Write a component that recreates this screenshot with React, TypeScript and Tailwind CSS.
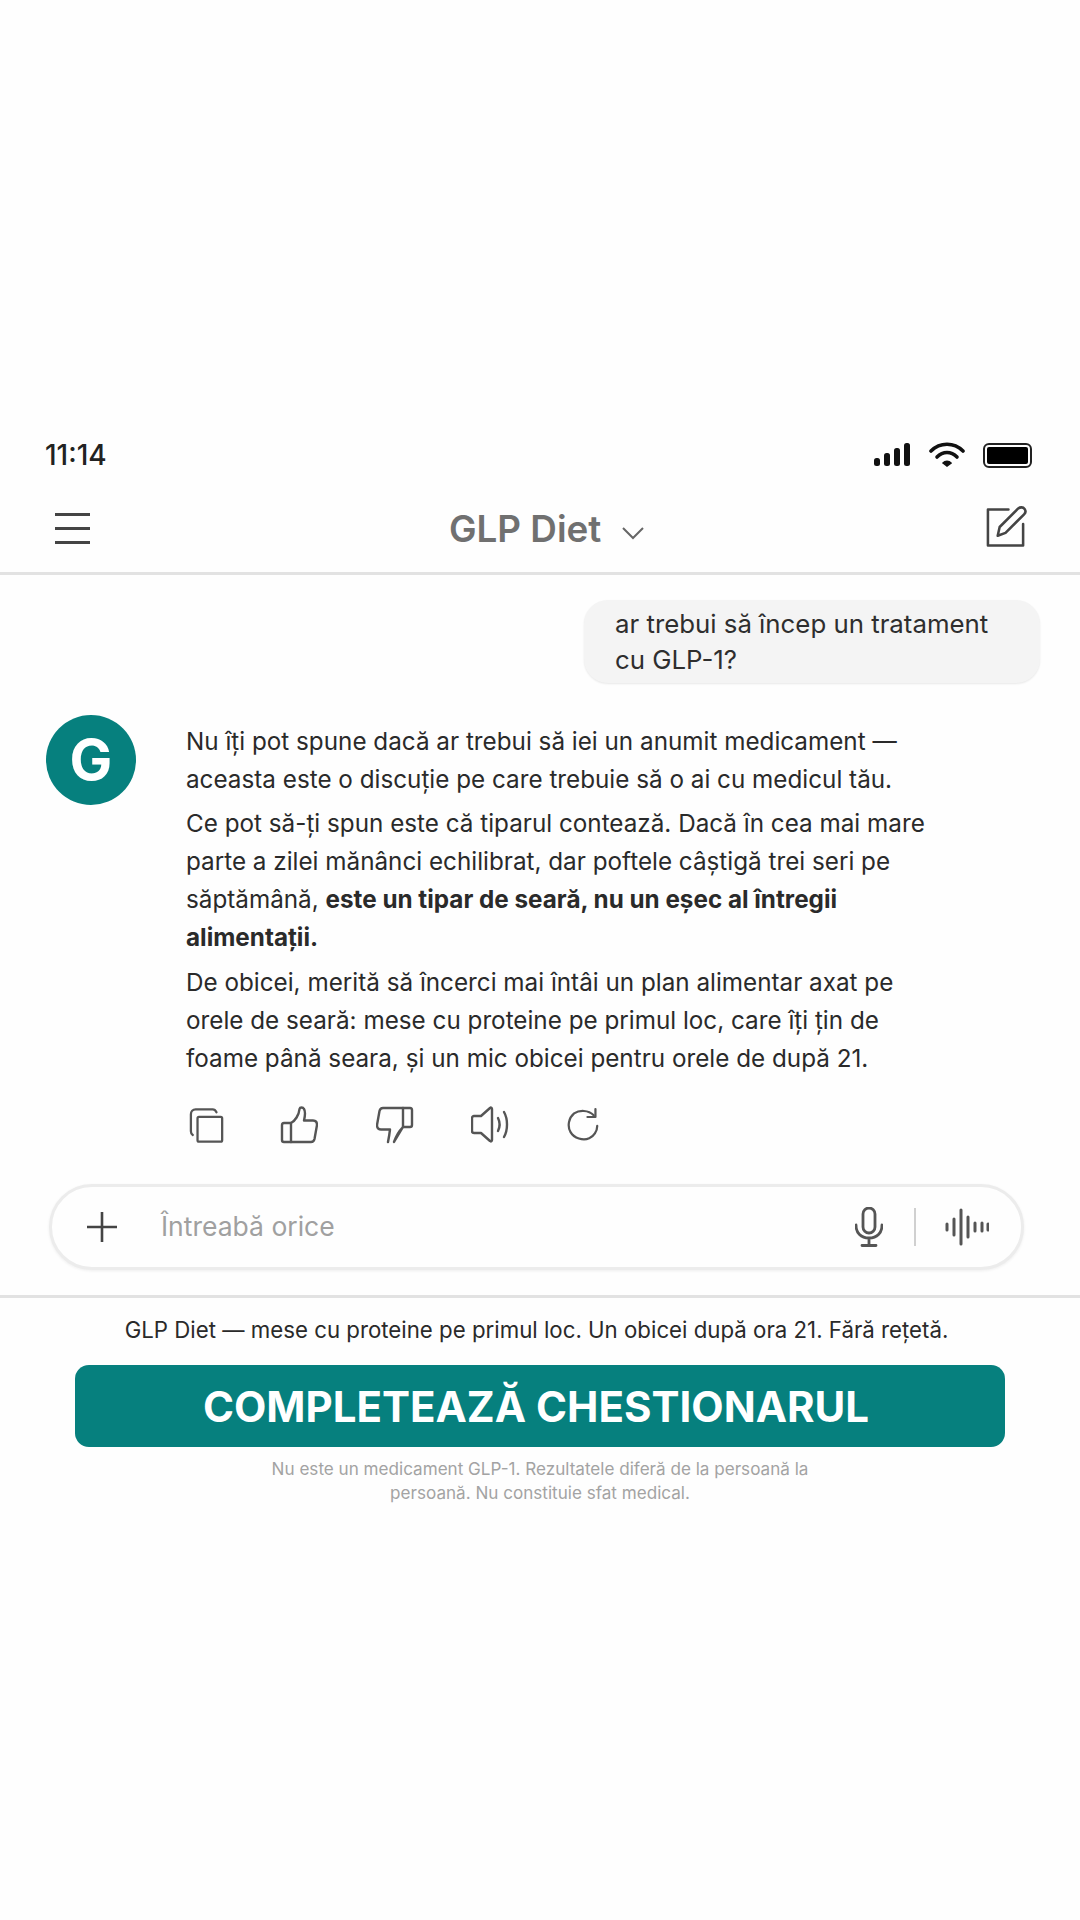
import React from "react";

const Ic = ({ children, w = 40, h = 40, vb = "0 0 40 40", sw = 2, c = "#555" }: any) => (
  <svg width={w} height={h} viewBox={vb} fill="none" stroke={c} strokeWidth={sw} strokeLinecap="round" strokeLinejoin="round">{children}</svg>
);

export default function App() {
  return (
    <div className="w-[1080px] h-[1920px] bg-[#fefefe] font-['Inter',sans-serif] text-[#2a2a2a] overflow-hidden">
      <div className="h-[431px]" />
      <div className="h-[50px] pl-[45px] pr-[48px] flex items-center justify-between">
        <span className="text-[28px] font-medium text-[#222] mb-[2px]">11:14</span>
        <div className="flex items-center gap-[18px] mb-[2px]">
          <svg width="37" height="26" viewBox="0 0 37 26" fill="#111">
            <rect x="0" y="16" width="6" height="8" rx="2.5" /><rect x="10" y="11" width="6" height="13" rx="2.5" /><rect x="20" y="6" width="6" height="18" rx="2.5" /><rect x="30" y="1" width="6" height="23" rx="2.5" />
          </svg>
          <svg width="36" height="26" viewBox="0 0 36 26" fill="none" stroke="#111" strokeWidth="3.6" strokeLinecap="round">
            <path d="M2 9C11 0 25 0 34 9" /><path d="M8 15C14 9 22 9 28 15" /><path d="M14 21L18 24L22 21C20 18.500 16 18.500 14 21Z" fill="#111" strokeWidth="1.500" />
          </svg>
          <div className="w-[49px] h-[25px] rounded-[6px] border-[2px] border-[#222] p-[2px]"><div className="w-full h-full bg-black rounded-[2px]" /></div>
        </div>
      </div>
      <div className="h-[94px] relative flex items-center justify-between pl-[55px] pr-[52px] border-b-[3px] border-[#e2e2e2]">
        <div className="flex flex-col gap-[11px] w-[35px] mt-[4px]">
          <div className="h-[3px] bg-[#444]" /><div className="h-[3px] bg-[#444]" /><div className="h-[3px] bg-[#444]" />
        </div>
        <div className="absolute left-[449px] top-[26px] flex items-center gap-[20px]">
          <span className="text-[36.800px] font-semibold text-[#707070] leading-[44px]">GLP Diet</span>
          <svg width="24" height="14" viewBox="0 0 24 14" fill="none" stroke="#666" strokeWidth="2" className="mt-[8px]"><path d="M2 2L12 12L22 2" /></svg>
        </div>
        <Ic w={43} h={44} vb="0 0 44 44" sw={2.600} c="#444">
          <path d="M24 4H3V41H39V19" />
          <path d="M13 31L15 22L34 3C36 1.500 39 1.500 40.500 3.500C42 5.500 41.500 7.500 40 9L21 28Z" />
        </Ic>
      </div>
      <div className="flex justify-end pt-[25px] pr-[40px]">
        <div className="w-[456px] h-[83px] rounded-[24px] bg-[#f4f4f4] pl-[31px] pt-[6px] text-[25.800px] leading-[36px] text-[#2e2e2e] shadow-[0_1px_2px_#e8e8e8]">
          ar trebui să încep un tratament<br />cu GLP-1?
        </div>
      </div>
      <div className="flex pl-[46px] pt-[32px]">
        <div className="w-[90px] h-[90px] rounded-full bg-[#06807e] flex items-center justify-center text-white text-[57px] font-bold shrink-0">G</div>
        <div className="ml-[50px] w-[800px] text-[24.250px] leading-[38px] text-[#2a2a2a] pt-[8px]">
          <p>Nu îți pot spune dacă ar trebui să iei un anumit medicament —<br />aceasta este o discuție pe care trebuie să o ai cu medicul tău.</p>
          <p className="mt-[6px]">Ce pot să-ți spun este că tiparul contează. Dacă în cea mai mare<br />parte a zilei mănânci echilibrat, dar poftele câștigă trei seri pe<br />săptămână, <b className="font-bold">este un tipar de seară, nu un eșec al întregii<br />alimentații.</b></p>
          <p className="mt-[7px]">De obicei, merită să încerci mai întâi un plan alimentar axat pe<br />orele de seară: mese cu proteine pe primul loc, care îți țin de<br />foame până seara, și un mic obicei pentru orele de după 21.</p>
        </div>
      </div>
      <div className="flex items-center pl-[189px] pt-[16px] h-[62px] box-content">
        <div className="flex items-center">
          <Ic w={36} h={37} vb="0 0 38 38" sw={2.400}>
            <rect x="9" y="10" width="26" height="26" rx="1.500" />
            <path d="M4 29C2.500 28 2 27 2 25V7C2 4 4 2 7 2H25C27 2 28 3 29 5" />
          </Ic>
          <div className="ml-[55px]"><Ic w={38} h={38} vb="0 0 38 38" sw={2.400}>
            <path d="M11 17V36H31C33 36 34 35 34.500 33L37 19C37 16 36 14.500 33 14.500H24C25 10 26 6 24 3C23 1 20 1 19.500 3C19 9 15 15 11 17Z" />
            <path d="M11 17H4C2.500 17 2 18 2 19V34C2 35 2.500 36 4 36H11" />
          </Ic></div>
          <div className="ml-[58px]"><Ic w={38} h={38} vb="0 0 38 38" sw={2.400}>
            <path d="M27 21V2H7C5 2 4 3 3.500 5L1 19C1 22 2 23.500 5 23.500H14C13.500 28 13 31 12 36M18 36C20 30 24 24 27 21Z" />
            <path d="M27 21H34C35.500 21 36 20 36 19V4C36 3 35.500 2 34 2H27" />
          </Ic></div>
          <div className="ml-[57px]"><Ic w={38} h={38} vb="0 0 38 38" sw={2.400}>
            <path d="M10 10H3C2 10 1 11 1 12V25C1 26 2 27 3 27H10L19 35C20 36 21 35 21 34V3C21 2 20 1 19 2Z" />
            <path d="M27 12C29 16 29 21 27 25" />
            <path d="M33 6C37 13 37 24 33 31" />
          </Ic></div>
          <div className="ml-[58px]"><Ic w={32} h={36} vb="0 0 36 38" sw={2.500}>
            <path d="M30 8C24 2 14 2 8 6C2 11 0 20 4 27C8 34 18 37 25 34C30 32 34 26 34 20" />
            <path d="M32 1V10H23" />
          </Ic></div>
        </div>
      </div>
      <div className="ml-[49px] mt-[28px] w-[975px] h-[86px] rounded-full border-[3px] border-[#ececec] bg-[#fefefe] flex items-center pl-[35px] pr-[32px] shadow-[0_1px_3px_#eeeeee]">
        <svg width="30" height="30" viewBox="0 0 30 30" stroke="#444" strokeWidth="2.600"><path d="M15 0V30M0 15H30" /></svg>
        <span className="ml-[44px] text-[26.500px] text-[#a0a0a0]">Întreabă orice</span>
        <div className="ml-auto flex items-center">
          <Ic w={28} h={40} vb="0 0 28 40" sw={2.800} c="#555">
            <rect x="8" y="1" width="12" height="25" rx="6" />
            <path d="M1 18C1 26 6 31 14 31C22 31 27 26 27 18M14 31V38M7 38.500H21" />
          </Ic>
          <div className="w-[2px] h-[38px] bg-[#d0d0d0] ml-[31px] mr-[29px]" />
          <Ic w={44} h={38} vb="0 0 44 38" sw={3} c="#555">
            <path d="M2 16V22M9 11V27M16 2V36M23 9V29M30 15V23M37 15V23M43 16V22" />
          </Ic>
        </div>
      </div>
      <div className="mt-[25px] border-t-[3px] border-[#e2e2e2]" />
      <p className="mt-[18px] pr-[7px] text-center text-[22.260px] leading-[28px] text-[#2a2a2a]">GLP Diet — mese cu proteine pe primul loc. Un obicei după ora 21. Fără rețetă.</p>
      <div className="mx-[75px] mt-[21px] h-[82px] pr-[8px] rounded-[14px] bg-[#06807e] flex items-center justify-center text-white text-[42px] font-bold">COMPLETEAZĂ CHESTIONARUL</div>
      <p className="mt-[10px] text-center text-[17.100px] leading-[24px] text-[#a3a3a3]">Nu este un medicament GLP-1. Rezultatele diferă de la persoană la<br />persoană. Nu constituie sfat medical.</p>
    </div>
  );
}
